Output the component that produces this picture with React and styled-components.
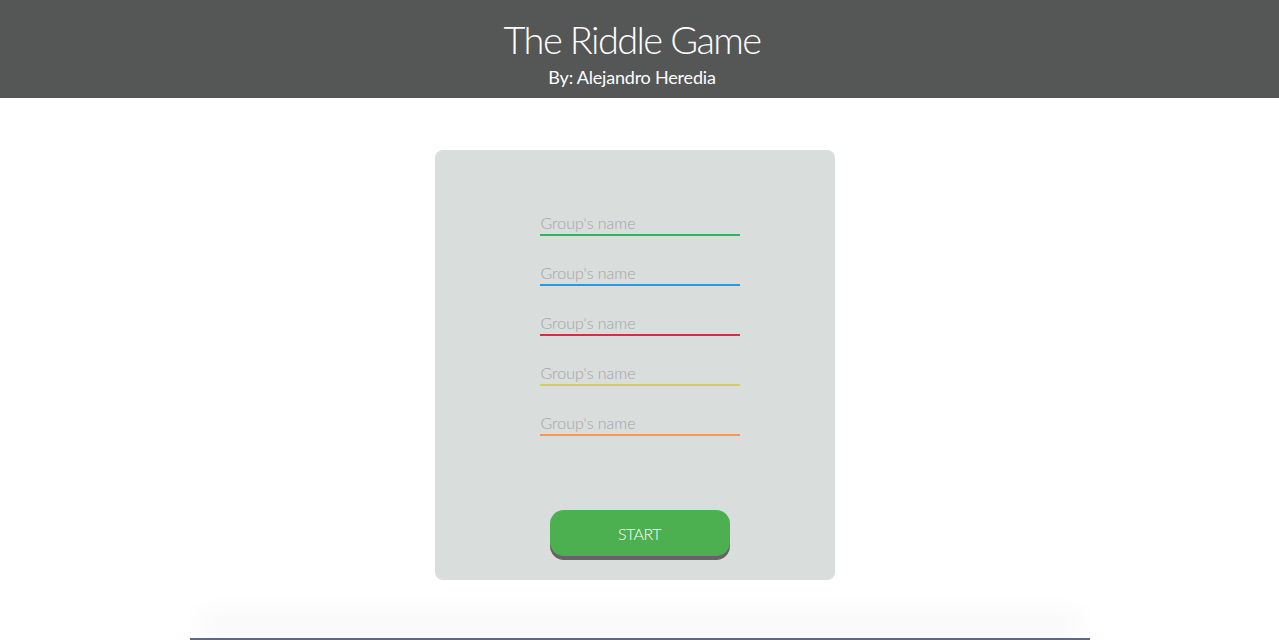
import styled, { createGlobalStyle } from 'styled-components';

const GlobalStyle = createGlobalStyle`
  html, body {
    margin: 0;
    padding: 0;
    background: #ffffff;
    font-family: 'Lato', 'Open Sans', sans-serif;
  }
  * {
    box-sizing: border-box;
  }
`;

const Page = styled.div`
  width: 100%;
  height: 640px;
  display: flex;
  flex-direction: column;
  overflow: hidden;
`;

const Header = styled.header`
  height: 98px;
  background-color: #555656;
  color: #ffffff;
  display: flex;
  flex-direction: column;
  align-items: center;
  padding: 16px 15px 0 0;
`;

const Title = styled.h1`
  margin: 0;
  font-size: 38px;
  font-weight: 300;
  line-height: 46px;
  letter-spacing: -1.6px;
`;

const Subtitle = styled.h2`
  margin: 4px 0 0;
  font-size: 18px;
  font-weight: 400;
  line-height: 22px;
  letter-spacing: -0.2px;
`;

const Main = styled.main`
  flex: 1;
  display: flex;
  flex-direction: column;
  align-items: center;
  padding-top: 52px;
`;

const Card = styled.form`
  width: 400px;
  height: 430px;
  margin-right: 10px;
  background-color: #d9dddc;
  border-radius: 8px;
  display: flex;
  flex-direction: column;
  align-items: center;
  padding: 64px 0 0 10px;
`;

const Fields = styled.div`
  display: flex;
  flex-direction: column;
  gap: 28px;
`;

const GroupInput = styled.input`
  width: 200px;
  height: 22px;
  padding: 0 0 4px 1px;
  border: none;
  border-bottom: 2px solid ${(p) => p.$color};
  background: transparent;
  outline: none;
  font-family: 'Lato', sans-serif;
  font-weight: 300;
  font-size: 16px;
  color: #555;
  &::placeholder {
    color: #a3a5a5;
  }
`;

const StartBtn = styled.button`
  margin-top: 74px;
  width: 180px;
  height: 46px;
  border: none;
  border-radius: 14px;
  background-color: #4caf50;
  color: #ffffff;
  font-family: 'Lato', sans-serif;
  font-size: 16px;
  font-weight: 300;
  letter-spacing: -0.5px;
  box-shadow: 0 4px 0 #646464;
  cursor: pointer;
`;

const Shelf = styled.div`
  margin-top: auto;
  align-self: center;
  width: 900px;
  height: 48px;
  background: linear-gradient(to bottom, #ffffff, #f0f0f0);
  box-shadow: 0 0 30px 10px rgba(255, 255, 255, 1) inset;
  border-bottom: 2px solid #5a6a8a;
`;

const colors = ['#35b25f', '#1e9ce8', '#d7303d', '#d4cd64', '#f7945a'];

export default function App() {
  return (
    <Page>
      <GlobalStyle />
      <Header>
        <Title>The Riddle Game</Title>
        <Subtitle>By: Alejandro Heredia</Subtitle>
      </Header>
      <Main>
        <Card onSubmit={(e) => e.preventDefault()}>
          <Fields>
            {colors.map((c) => (
              <GroupInput key={c} $color={c} type="text" placeholder="Group's name" />
            ))}
          </Fields>
          <StartBtn type="submit">START</StartBtn>
        </Card>
      </Main>
      <Shelf />
    </Page>
  );
}
